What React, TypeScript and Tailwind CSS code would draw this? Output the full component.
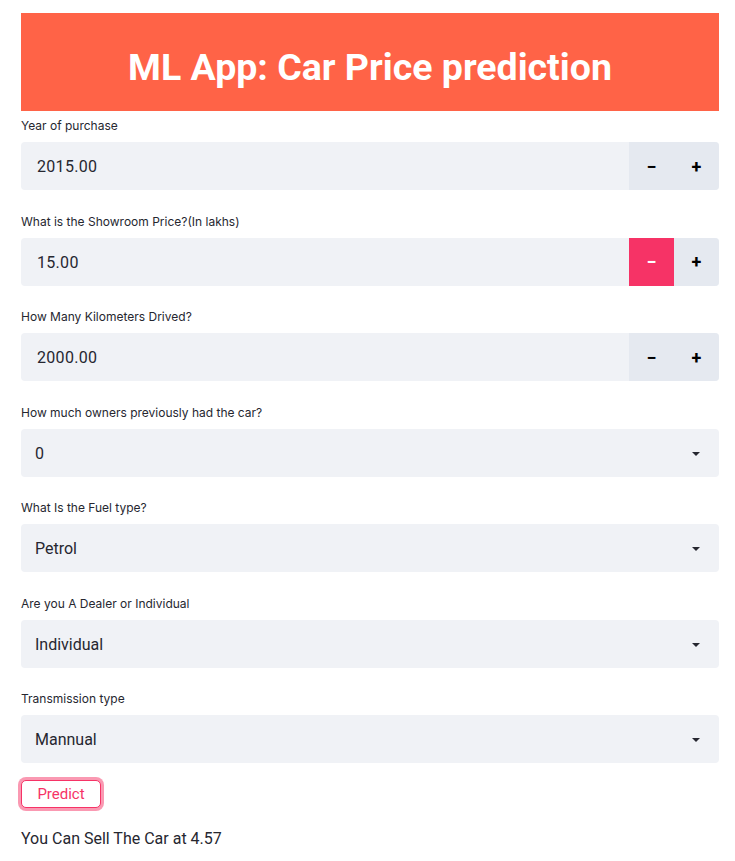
import React from "react";

const FONT = { fontFamily: "Roboto, 'Liberation Sans', sans-serif" };

const NumberField = ({
  label,
  value,
  activeMinus = false,
}: {
  label: string;
  value: string;
  activeMinus?: boolean;
}) => (
  <div>
    <label className="block h-[29px] pt-[4px] text-[12px] text-[#262730]" style={{ fontFamily: "Inter, sans-serif" }}>
      {label}
    </label>
    <div className="flex h-[48px] rounded bg-[#f0f2f6] overflow-hidden">
      <div className="flex-1 flex items-center pl-4 pt-[2px] text-[16px] tracking-[0.3px] text-[#262730]">{value}</div>
      <button
        className={`w-[45px] flex items-center justify-center text-[18px] font-bold ${
          activeMinus ? "bg-[#f63366] text-white" : "bg-[#e5e9f0] text-black"
        }`}
      >
        −
      </button>
      <button className="w-[45px] flex items-center justify-center bg-[#e5e9f0] text-[18px] font-bold text-black">
        +
      </button>
    </div>
  </div>
);

const SelectField = ({ label, value }: { label: string; value: string }) => (
  <div>
    <label className="block h-[29px] pt-[4px] text-[12px] text-[#262730]" style={{ fontFamily: "Inter, sans-serif" }}>
      {label}
    </label>
    <div className="flex h-[48px] items-center justify-between rounded bg-[#f0f2f6] pl-[14px] pr-[18px] pt-[2px] text-[16px] text-[#262730]">
      <span>{value}</span>
      <svg width="10" height="6" viewBox="0 0 10 6">
        <path d="M1 1h8L5 5z" fill="#262730" />
      </svg>
    </div>
  </div>
);

export default function App() {
  return (
    <div className="bg-white w-[735px] h-[861px] pt-[13px]" style={FONT}>
      <div className="ml-[21px] w-[698px]">
        <div className="h-[98px] bg-[#ff6347] flex items-center justify-center pt-[10px]">
          <h1 className="text-white text-[37.5px] font-bold">ML App: Car Price prediction</h1>
        </div>

        <div className="flex flex-col gap-[18.5px] mt-[2px]">
          <NumberField label="Year of purchase" value="2015.00" />
          <NumberField label="What is the Showroom Price?(In lakhs)" value="15.00" activeMinus />
          <NumberField label="How Many Kilometers Drived?" value="2000.00" />
          <SelectField label="How much owners previously had the car?" value="0" />
          <SelectField label="What Is the Fuel type?" value="Petrol" />
          <SelectField label="Are you A Dealer or Individual" value="Individual" />
          <SelectField label="Transmission type" value="Mannual" />
        </div>

        <button className="mt-[17px] h-[28px] w-[80px] rounded-[5px] border border-[#f63366] bg-white text-[15px] text-[#f63366] ring-[3px] ring-[#f63366]/50">
          Predict
        </button>

        <p className="mt-[19px] text-[16px] text-[#262730]">You Can Sell The Car at 4.57</p>
      </div>
    </div>
  );
}
